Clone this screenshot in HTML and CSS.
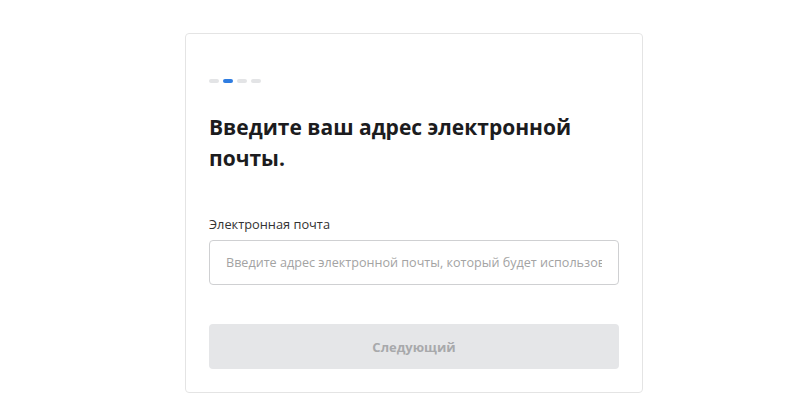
FILE: index.html
```html
<!DOCTYPE html>
<html lang="ru">

<head>
  <title>Электронная почта</title>
  <meta charset="UTF-8">
  <meta name="viewport" content="width=device-width, initial-scale=1.0">
  <link rel="stylesheet" href="styles.css">
</head>

<body>
  <div class="card">
    <div class="steps">
      <span class="step"></span>
      <span class="step active"></span>
      <span class="step"></span>
      <span class="step"></span>
    </div>

    <h1>Введите ваш адрес электронной почты.</h1>

    <div class="field">
      <label for="emailInput">Электронная почта</label>
      <input type="text" id="emailInput"
        placeholder="Введите адрес электронной почты, который будет использоваться для входа" />
    </div>

    <button class="next-button" disabled>Следующий</button>
  </div>
</body>

</html>
```

FILE: styles.css
```css
:root {
  --accent-color: #2f7de1;
  --step-color: #e3e4e6;
  --border-color: #e4e4e4;
  --text-color: #1c1c1e;
  --border-radius: 4px;
}

* {
  box-sizing: border-box;
  margin: 0;
  padding: 0;
  font-family: 'Open Sans', 'Noto Sans', sans-serif;
}

body {
  background-color: #ffffff;
  color: var(--text-color);
  padding: 33px 0 0 185px;
}

.card {
  width: 458px;
  border: 1px solid var(--border-color);
  border-radius: var(--border-radius);
  padding: 45px 23px 23px 23px;
}

.steps {
  display: flex;
  gap: 4px;
  margin-bottom: 29px;
}

.step {
  width: 10px;
  height: 4px;
  border-radius: 2px;
  background-color: var(--step-color);
}

.step.active {
  background-color: var(--accent-color);
}

h1 {
  font-size: 21px;
  font-weight: 700;
  line-height: 31px;
  max-width: 380px;
  margin-bottom: 41px;
}

.field label {
  display: block;
  font-size: 12.8px;
  color: #333333;
  margin-bottom: 7px;
}

.field input {
  width: 100%;
  height: 45px;
  padding: 0 16px;
  border: 1px solid #cfd0d2;
  border-radius: var(--border-radius);
  font-size: 12.6px;
  color: var(--text-color);
}

.field input::placeholder {
  color: #a3a3a3;
}

.next-button {
  display: block;
  width: 100%;
  height: 45px;
  margin-top: 39px;
  border: none;
  border-radius: var(--border-radius);
  background-color: #e5e6e8;
  color: #a8a9ab;
  font-size: 13px;
  font-weight: 700;
}
```
